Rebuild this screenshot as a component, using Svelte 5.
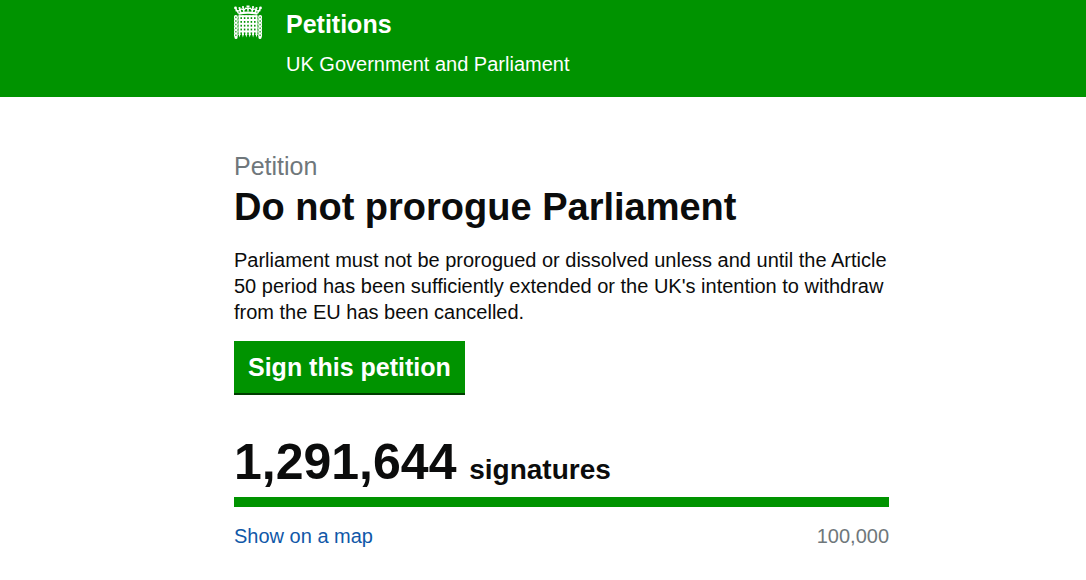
<script>
  let title = 'Do not prorogue Parliament';
  let signatures = 1291644;
  let threshold = 100000;

  const bars = [5.5, 8.9, 12.3, 15.7, 19.1, 22.5];
  const rails = [11.2, 15, 18.8, 22.6, 26.4];
  const links = [12.4, 16, 19.6, 23.2, 26.8, 30.2];

  const format = (n) => n.toLocaleString('en-GB');
  $: progress = Math.min(100, (signatures / threshold) * 100);
</script>

<header>
  <a class="brand" href="/">
    <svg class="portcullis" viewBox="0 0 28 34" aria-hidden="true">
      <g fill="none" stroke="#fff">
        <path d="M4.5 8.8Q14 6.4 23.5 8.8" stroke-width="2.2" />
        <path d="M4.5 8.5L1.5 3M7 8L5.5 3.5M10 7L9 2.5M14 6.5V1M18 7L19 2.5M21 8L22.5 3.5M23.5 8.5L26.5 3" stroke-width="1.4" />
        <path d="M1.5 5.5L5 6L7 4L10 5L12 3L14 4L16 3L18 5L21 4L23 6L26.5 5.5" stroke-width="1.3" />
        {#each bars as x}
          <path d="M{x} 10.5V30" stroke-width="1.9" />
        {/each}
        {#each rails as y}
          <path d="M4.6 {y}H23.4" stroke-width="2" />
        {/each}
        {#each links as y}
          <ellipse cx="1.9" cy={y} rx="1.3" ry="1.7" stroke-width="1.4" />
          <ellipse cx="26.1" cy={y} rx="1.3" ry="1.7" stroke-width="1.4" />
        {/each}
      </g>
      <g fill="#fff">
        {#each bars as x}
          <path d="M{x - 1} 29H{x + 1}L{x} 32.5Z" />
        {/each}
        <circle cx="1.5" cy="3" r="1.4" />
        <circle cx="5.5" cy="3" r="1.1" />
        <circle cx="9" cy="2" r="1.1" />
        <path d="M12.5 0.5H15.5V2H12.5Z" />
        <circle cx="19" cy="2" r="1.1" />
        <circle cx="22.5" cy="3" r="1.1" />
        <circle cx="26.5" cy="3" r="1.4" />
        <circle cx="2" cy="32.5" r="1.5" />
        <circle cx="26" cy="32.5" r="1.5" />
      </g>
    </svg>
    <span class="names">
      <span class="site">Petitions</span>
      <span class="owner">UK Government and Parliament</span>
    </span>
  </a>
</header>

<main>
  <h1>
    <span class="kicker">Petition</span>
    {title}
  </h1>
  <p class="action">
    Parliament must not be prorogued or dissolved unless and until the Article 50 period has been
    sufficiently extended or the UK's intention to withdraw from the EU has been cancelled.
  </p>
  <button type="button">Sign this petition</button>

  <p class="count"><span class="number">{format(signatures)}</span> signatures</p>
  <div class="graph"><div class="bar" style="width: {progress}%"></div></div>
  <div class="details">
    <a href="/map">Show on a map</a>
    <span class="threshold">{format(threshold)}</span>
  </div>
</main>

<style>
  :global(body) {
    margin: 0;
    background: #fff;
    color: #0b0c0c;
    font-family: "Liberation Sans", Arial, sans-serif;
    font-size: 20px;
    line-height: 26px;
  }
  header {
    background: #009300;
    padding: 5px 197px 20px 234px;
  }
  .brand {
    display: flex;
    gap: 24px;
    color: #fff;
    text-decoration: none;
  }
  .portcullis {
    width: 28px;
    height: 34px;
    flex: none;
  }
  .names {
    display: flex;
    flex-direction: column;
    gap: 8px;
  }
  .site {
    font-size: 25px;
    font-weight: bold;
    line-height: 38px;
  }
  main {
    padding: 53px 197px 30px 234px;
  }
  h1 {
    margin: 0;
    font-size: 38px;
    line-height: 50px;
  }
  .kicker {
    display: block;
    color: #6f777b;
    font-size: 25px;
    font-weight: normal;
    line-height: 32px;
  }
  .action {
    margin: 15px 0 16px;
  }
  button {
    display: block;
    border: 0;
    border-bottom: 2px solid #003d00;
    padding: 10px 14px;
    background: #009300;
    color: #fff;
    font: bold 25px/32px "Liberation Sans", Arial, sans-serif;
    cursor: pointer;
  }
  .count {
    margin: 40px 0 0;
    font-size: 28px;
    font-weight: bold;
    line-height: 54px;
  }
  .number {
    margin-right: 5px;
    font-size: 50px;
  }
  .graph {
    background: #dee0e2;
  }
  .bar {
    height: 10px;
    background: #009300;
  }
  .details {
    display: flex;
    justify-content: space-between;
    margin-top: 16px;
  }
  .details a {
    color: #1058a8;
    text-decoration: none;
  }
  .threshold {
    color: #6f777b;
  }
</style>
